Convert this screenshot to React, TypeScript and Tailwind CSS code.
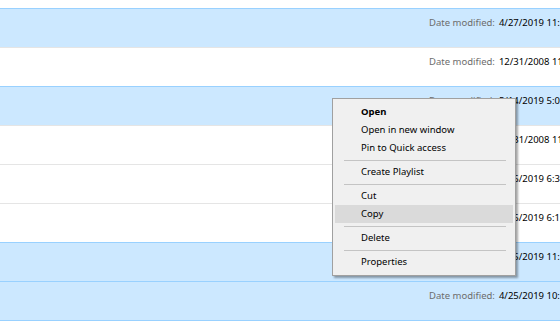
const rows = [
  { selected: true, value: "4/27/2019 11:24 AM" },
  { selected: false, value: "12/31/2008 11:00 AM" },
  { selected: true, value: "5/14/2019 5:03 PM" },
  { selected: false, value: "12/31/2008 11:00 AM" },
  { selected: false, value: "4/26/2019 6:31 PM" },
  { selected: false, value: "4/26/2019 6:11 PM" },
  { selected: true, value: "4/25/2019 11:29 AM" },
  { selected: true, value: "4/25/2019 10:32 AM" },
];

function Row({ selected, value }: { selected: boolean; value: string }) {
  return (
    <div
      className={
        selected
          ? "h-[40px] -mt-px border-y border-[#99d1ff] bg-[#cce8ff] flex pl-[429px] pt-[7px] whitespace-nowrap"
          : "h-[40px] -mt-px border-y border-[#e5e5e5] bg-white flex pl-[429px] pt-[7px] whitespace-nowrap"
      }
    >
      <span className="text-[#6d6d6d]">Date modified:</span>
      <span className="ml-[4px] text-black">{value}</span>
    </div>
  );
}

function Item({ label, bold, active }: { label: string; bold?: boolean; active?: boolean }) {
  return (
    <div
      className={
        "h-[18px] flex items-center pl-[26px] text-black " +
        (active ? "bg-[#dadada] " : "") +
        (bold ? "font-bold" : "")
      }
    >
      {label}
    </div>
  );
}

function Sep() {
  return (
    <div className="h-[6px] flex items-center pl-[9px] pr-[7px]">
      <div className="h-px w-full bg-[#c4c4c4]" />
    </div>
  );
}

export default function App() {
  return (
    <div
      className="relative w-[560px] h-[336px] overflow-hidden bg-white text-[9.5px]"
      style={{ fontFamily: '"Segoe UI", "Noto Sans", sans-serif' }}
    >
      <div className="pt-[9px] w-[700px]">
        {rows.map((r, i) => (
          <Row key={i} selected={r.selected} value={r.value} />
        ))}
      </div>

      {/* context menu */}
      <div className="absolute left-[332px] top-[98px] w-[184px] border border-[#a0a0a0] bg-[#f0f0f0] py-[4px] px-[2px] shadow-[2px_2px_2px_rgba(0,0,0,0.35)]">
        <Item label="Open" bold />
        <Item label="Open in new window" />
        <Item label="Pin to Quick access" />
        <Sep />
        <Item label="Create Playlist" />
        <Sep />
        <Item label="Cut" />
        <Item label="Copy" active />
        <Sep />
        <Item label="Delete" />
        <Sep />
        <Item label="Properties" />
      </div>
    </div>
  );
}
